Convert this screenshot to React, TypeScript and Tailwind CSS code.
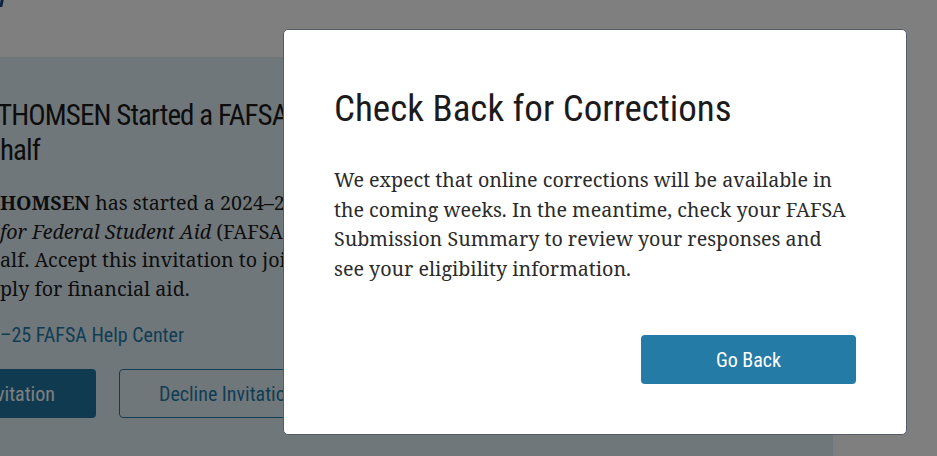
import React from 'react';

const SANS = "font-['Roboto_Condensed','Liberation_Sans_Narrow','Arial_Narrow',sans-serif]";
const SERIF = "font-['Noto_Serif','DejaVu_Serif',serif]";

function BackgroundPage() {
  return (
    <div className="flex h-full flex-col">
      {/* header strip */}
      <div className="h-[57px] shrink-0 bg-white">
        <div className="h-[7px] w-[3px] -skew-x-12 bg-[#1a4480]" />
      </div>
      {/* invitation card */}
      <div className="w-[833px] flex-1 overflow-hidden bg-[#e1eff7] pt-[41px] text-[#1b1b1b]">
        <h2 className={`${SANS} -ml-[3px] whitespace-nowrap text-[29px] leading-[35px] tracking-[-0.9px]`}>
          THOMSEN Started a FAFSA<sup className="text-[14px]">®</sup> Form on Your
          <br />
          <span className="ml-[3px]">half</span>
        </h2>
        <div className={`${SERIF} mt-[21px] whitespace-nowrap text-[19.7px] leading-[28.5px] text-[#1b1b1b]`}>
          <div>
            <b>HOMSEN</b> has started a 2024–25 <i>Free Application</i>
          </div>
          <div>
            <i>for Federal Student Aid</i> (FAFSA<sup>®</sup>) form on your
          </div>
          <div>alf. Accept this invitation to join and help them</div>
          <div>ply for financial aid.</div>
        </div>
        <div className={`${SANS} mt-[17px] text-[20px] text-[#237ba6]`}>–25 FAFSA Help Center</div>
        <div className={`${SANS} mt-[19px] flex gap-[23px] text-[20px]`}>
          <div className="flex h-[49px] w-[96px] items-center rounded-r-[4px] bg-[#1e74a1] text-white">
            <span className="-ml-[4px]">vitation</span>
          </div>
          <div className="flex h-[49px] w-[240px] items-center rounded-[4px] border border-[#237ba6] pl-[39px] text-[#237ba6]">
            Decline Invitation
          </div>
        </div>
      </div>
    </div>
  );
}

export default function App() {
  return (
    <div className="relative h-[456px] w-[937px] overflow-hidden bg-white">
      <BackgroundPage />
      <div className="absolute inset-0 bg-black/50" />
      {/* modal dialog */}
      <div className="absolute left-[283px] top-[29px] flex h-[406px] w-[624px] flex-col rounded-[5px] border border-[#565c65] bg-white px-[50px] pb-[50px] pt-[57px]">
        <h1 className={`${SANS} text-[37px] leading-[44px] text-[#1b1b1b]`}>Check Back for Corrections</h1>
        <p className={`${SERIF} mt-[34px] text-[19.7px] leading-[29.5px] text-[#2b2b2b]`}>
          We expect that online corrections will be available in the coming weeks. In the meantime, check your
          FAFSA Submission Summary to review your responses and see your eligibility information.
        </p>
        <div className="mt-auto flex justify-end">
          <button
            className={`${SANS} h-[49px] w-[215px] rounded-[4px] bg-[#237ba6] text-[20px] text-white`}
          >
            Go Back
          </button>
        </div>
      </div>
    </div>
  );
}
